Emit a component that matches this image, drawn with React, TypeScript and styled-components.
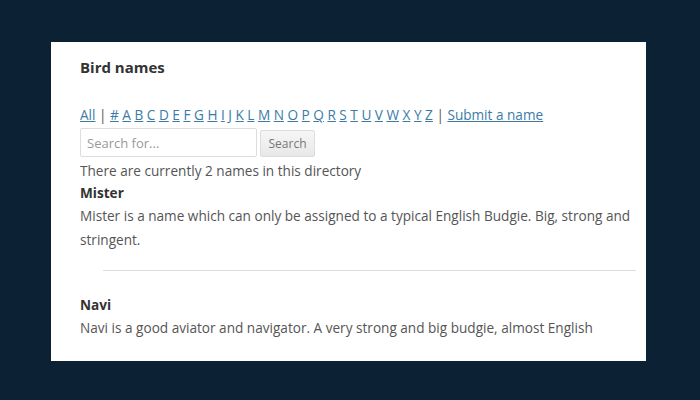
import * as React from 'react';
import styled, { createGlobalStyle } from 'styled-components';

const letters = ['#', ...'ABCDEFGHIJKLMNOPQRSTUVWXYZ'.split('')];

const names = [
    {
        name: 'Mister',
        text: 'Mister is a name which can only be assigned to a typical English Budgie. Big, strong and stringent.',
    },
    {
        name: 'Navi',
        text: 'Navi is a good aviator and navigator. A very strong and big budgie, almost English',
    },
];

const App = () => {
    const [query, setQuery] = React.useState('');

    return (
        <>
            <GlobalStyle />
            <Page>
                <Card>
                    <Title>Bird names</Title>

                    <Alphabet>
                        <Link href="#">All</Link> <Sep>|</Sep>{' '}
                        {letters.map((letter) => (
                            <React.Fragment key={letter}>
                                <Link href="#">{letter}</Link>{' '}
                            </React.Fragment>
                        ))}
                        <Sep>|</Sep> <Link href="#">Submit a name</Link>
                    </Alphabet>

                    <SearchRow>
                        <SearchInput
                            placeholder="Search for..."
                            value={query}
                            onChange={(e) => setQuery(e.target.value)}
                        />
                        <SearchButton>Search</SearchButton>
                    </SearchRow>

                    <Count>There are currently 2 names in this directory</Count>

                    {names.map((entry, i) => (
                        <React.Fragment key={entry.name}>
                            {i > 0 && <Divider />}
                            <Entry>
                                <EntryName>{entry.name}</EntryName>
                                <EntryText>{entry.text}</EntryText>
                            </Entry>
                        </React.Fragment>
                    ))}
                </Card>
            </Page>
        </>
    );
};

export default App;

const GlobalStyle = createGlobalStyle`
    html, body {
        margin: 0;
        padding: 0;
        background-color: #0c2134;
    }

    body {
        font-family: 'Open Sans', 'Liberation Sans', sans-serif;
        font-size: 13.6px;
        color: #555;
    }
`;

const Page = styled.div`
    width: 700px;
    height: 400px;
    padding: 42px 54px 39px 51px;
    box-sizing: border-box;
`;

const Card = styled.div`
    background-color: #fff;
    height: 100%;
    box-sizing: border-box;
    padding: 15px 10px 0 29px;
    overflow: hidden;
`;

const Title = styled.h2`
    margin: 0;
    font-size: 15px;
    font-weight: 700;
    color: #333;
    line-height: 20px;
`;

const Alphabet = styled.div`
    margin-top: 28px;
    line-height: 20px;
`;

const Link = styled.a`
    color: #3b7ba6;
    text-decoration: underline;
`;

const Sep = styled.span`
    color: #555;
`;

const SearchRow = styled.div`
    display: flex;
    align-items: flex-end;
    gap: 3px;
    margin-top: 3px;
`;

const SearchInput = styled.input`
    width: 177px;
    height: 29px;
    box-sizing: border-box;
    border: 1px solid #ddd;
    border-radius: 2px;
    padding: 0 6px;
    font-family: inherit;
    font-size: 13px;
    color: #555;
    outline: none;

    &::placeholder {
        color: #999;
    }
`;

const SearchButton = styled.button`
    height: 27px;
    width: 55px;
    box-sizing: border-box;
    border: 1px solid #ddd;
    border-radius: 2px;
    background: linear-gradient(#f6f6f6, #e8e8e8);
    font-family: inherit;
    font-size: 12px;
    color: #777;
    padding: 0;
`;

const Count = styled.p`
    margin: 3px 0 0;
    line-height: 22px;
`;

const Entry = styled.div`
    display: flex;
    flex-direction: column;
`;

const EntryName = styled.h3`
    margin: 0;
    font-size: 13.6px;
    font-weight: 700;
    color: #333;
    line-height: 22px;
`;

const EntryText = styled.p`
    margin: 0;
    line-height: 24px;
`;

const Divider = styled.hr`
    border: 0;
    border-top: 1px solid #ddd;
    margin: 18px 0 23px 23px;
`;
